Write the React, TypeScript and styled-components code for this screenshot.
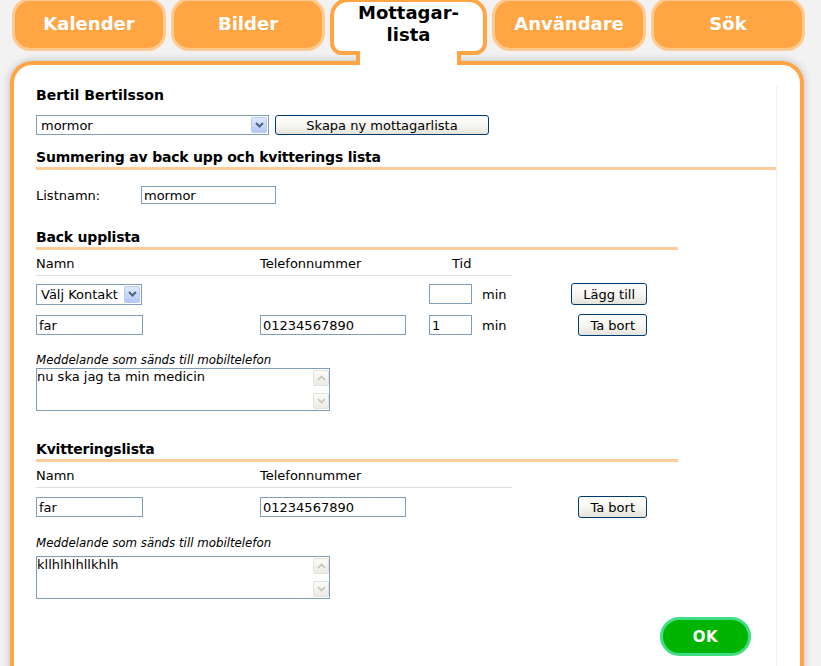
import React from "react";
import styled, { createGlobalStyle } from "styled-components";

const GlobalStyle = createGlobalStyle`
  html, body { margin: 0; padding: 0; background: #f2f2f2; }
  body {
    font-family: "DejaVu Sans", Verdana, sans-serif;
    font-size: 13px;
    color: #000;
    overflow: hidden;
  }
`;

const Page = styled.div`
  width: 821px;
  height: 666px;
  overflow: hidden;
`;

const TabBar = styled.div`
  display: flex;
  align-items: flex-start;
  gap: 5px;
  padding-left: 12px;
  height: 61px;
`;

const Tab = styled.div`
  box-sizing: border-box;
  width: 154px;
  height: 53px;
  margin-top: -2px;
  background: #ffa544;
  border: 3px solid #ffc98f;
  border-radius: 18px;
  display: flex;
  align-items: center;
  justify-content: center;
  padding-bottom: 2px;
  color: #fff;
  font-weight: bold;
  font-size: 18px;
`;

const ActiveTab = styled.div`
  position: relative;
  z-index: 2;
  width: 157px;
  margin-top: -2px;
  display: flex;
  flex-direction: column;
  align-items: center;
`;

const Bubble = styled.div`
  box-sizing: border-box;
  width: 100%;
  height: 57px;
  background: #fff;
  border: 4px solid #ffa544;
  border-radius: 18px 18px 12px 12px;
  text-align: center;
  font-weight: bold;
  font-size: 18px;
  line-height: 22px;
`;

const Neck = styled.div`
  box-sizing: border-box;
  width: 105px;
  height: 14px;
  margin-top: -4px;
  background: #fff;
  border-left: 4px solid #ffa544;
  border-right: 4px solid #ffa544;
`;

const Panel = styled.div`
  box-sizing: border-box;
  margin-left: 10px;
  width: 794px;
  height: 620px;
  border: 4px solid #ffa544;
  border-bottom: none;
  border-radius: 22px 22px 0 0;
  background: #fff;
  box-shadow: 0 0 8px rgba(0, 0, 0, 0.22);
`;

const Content = styled.div`
  box-sizing: border-box;
  width: 763px;
  height: 600px;
  margin-top: 21px;
  padding-left: 22px;
  border-right: 1px solid #efefef;
`;

const Title = styled.div`
  font-weight: bold;
  font-size: 14px;
  line-height: 18px;
`;

const SectionTitle = styled.div<{ $width: number; $top: number }>`
  margin-top: ${(p) => p.$top}px;
  width: ${(p) => p.$width}px;
  font-weight: bold;
  font-size: 14px;
  line-height: 18px;
  letter-spacing: -0.2px;
  padding-bottom: 1px;
  border-bottom: 3px solid #ffcc99;
`;

const ToolRow = styled.div`
  display: flex;
  align-items: center;
  gap: 6px;
  margin-top: 11px;
`;

const SelectBox = styled.div<{ $width: number; $height: number }>`
  box-sizing: border-box;
  width: ${(p) => p.$width}px;
  height: ${(p) => p.$height}px;
  border: 1px solid #7f9db9;
  background: #fff;
  display: flex;
  align-items: center;
  justify-content: space-between;
  padding: 1px 1px 1px 4px;
  font-size: 13px;
`;

const ArrowBox = styled.span`
  box-sizing: border-box;
  width: 16px;
  height: 100%;
  border: 1px solid #b9c9ef;
  border-radius: 2px;
  background: linear-gradient(#dfe9ff, #b4c9f7);
  display: flex;
  align-items: center;
  justify-content: center;
`;

const XPButton = styled.button<{ $width?: number; $height: number }>`
  box-sizing: border-box;
  ${(p) => (p.$width ? `width: ${p.$width}px;` : "padding: 0 11px;")}
  height: ${(p) => p.$height}px;
  border: 1px solid #003c74;
  border-radius: 3px;
  background: linear-gradient(180deg, #ffffff 0%, #f6f5f0 55%, #e3e2da 100%);
  font-family: inherit;
  font-size: 13px;
  color: #000;
  line-height: 1;
`;

const FieldRow = styled.div`
  display: flex;
  align-items: center;
  margin-top: 16px;
`;

const FieldLabel = styled.span`
  width: 105px;
`;

const TextInput = styled.input<{ $width: number; $height: number }>`
  box-sizing: border-box;
  width: ${(p) => p.$width}px;
  height: ${(p) => p.$height}px;
  border: 1px solid #7f9db9;
  padding: 0 2px;
  margin: 0;
  font-family: inherit;
  font-size: 13px;
  color: #000;
  background: #fff;
  outline: none;
`;

const HeaderGrid = styled.div<{ $top: number }>`
  display: grid;
  grid-template-columns: 224px 169px 83px;
  width: 476px;
  margin-top: ${(p) => p.$top}px;
  line-height: 16px;
  padding-bottom: 3px;
  border-bottom: 1px solid #dedede;
`;

const TidHead = styled.span`
  padding-left: 23px;
`;

const ListGrid = styled.div<{ $top: number }>`
  display: grid;
  grid-template-columns: 224px 169px 83px 135px;
  align-items: center;
  margin-top: ${(p) => p.$top}px;
`;

const TimeCell = styled.div`
  display: flex;
  align-items: center;
  gap: 10px;
`;

const ActionCell = styled.div`
  justify-self: end;
  display: flex;
`;

const NoteLabel = styled.div<{ $top: number }>`
  margin-top: ${(p) => p.$top}px;
  font-style: italic;
  font-size: 11.8px;
  line-height: 14px;
`;

const MessageBox = styled.div<{ $top: number }>`
  box-sizing: border-box;
  width: 294px;
  height: 43px;
  margin-top: ${(p) => p.$top}px;
  border: 1px solid #7f9db9;
  display: flex;
  background: #fff;
`;

const MessageText = styled.textarea`
  flex: 1;
  border: none;
  resize: none;
  outline: none;
  margin: 0;
  padding: 0;
  font-family: inherit;
  font-size: 13px;
  line-height: 16px;
  overflow: hidden;
  background: transparent;
  color: #000;
`;

const ScrollBar = styled.div`
  width: 16px;
  display: flex;
  flex-direction: column;
  justify-content: space-between;
  padding: 1px 0;
`;

const ScrollArrow = styled.span`
  box-sizing: border-box;
  width: 16px;
  height: 16px;
  border: 1px solid #e2e1da;
  border-radius: 2px;
  background: linear-gradient(#fbfbf9, #ecebe4);
  display: flex;
  align-items: center;
  justify-content: center;
`;

const Footer = styled.div`
  display: flex;
  justify-content: flex-end;
  padding-right: 25px;
  margin-top: 18px;
`;

const OkButton = styled.button`
  box-sizing: border-box;
  width: 91px;
  height: 39px;
  background: #00b400;
  border: 3px solid #3ede82;
  border-radius: 20px;
  color: #fff;
  font-family: inherit;
  font-weight: bold;
  font-size: 15px;
  letter-spacing: 0.5px;
`;

const Chevron = ({ up, color, w = 2 }: { up?: boolean; color: string; w?: number }) => (
  <svg width="9" height="6" viewBox="0 0 9 6">
    <polyline
      points={up ? "1,5 4.5,1.5 8,5" : "1,1 4.5,4.5 8,1"}
      fill="none"
      stroke={color}
      strokeWidth={w}
    />
  </svg>
);

const Select = ({ text, width, height }: { text: string; width: number; height: number }) => (
  <SelectBox $width={width} $height={height}>
    <span>{text}</span>
    <ArrowBox>
      <Chevron color="#4d6185" />
    </ArrowBox>
  </SelectBox>
);

const Message = ({ text, top }: { text: string; top: number }) => (
  <MessageBox $top={top}>
    <MessageText defaultValue={text} />
    <ScrollBar>
      <ScrollArrow>
        <Chevron up color="#c4c4bc" w={1.6} />
      </ScrollArrow>
      <ScrollArrow>
        <Chevron color="#c4c4bc" w={1.6} />
      </ScrollArrow>
    </ScrollBar>
  </MessageBox>
);

export default function App() {
  return (
    <Page>
      <GlobalStyle />
      <TabBar>
        <Tab>Kalender</Tab>
        <Tab>Bilder</Tab>
        <ActiveTab>
          <Bubble>
            Mottagar-
            <br />
            lista
          </Bubble>
          <Neck />
        </ActiveTab>
        <Tab>Användare</Tab>
        <Tab>Sök</Tab>
      </TabBar>
      <Panel>
        <Content>
          <Title>Bertil Bertilsson</Title>
          <ToolRow>
            <Select text="mormor" width={233} height={20} />
            <XPButton $width={214} $height={20}>
              Skapa ny mottagarlista
            </XPButton>
          </ToolRow>

          <SectionTitle $width={740} $top={13}>
            Summering av back upp och kvitterings lista
          </SectionTitle>
          <FieldRow>
            <FieldLabel>Listnamn:</FieldLabel>
            <TextInput $width={135} $height={18} defaultValue="mormor" />
          </FieldRow>

          <SectionTitle $width={642} $top={24}>
            Back upplista
          </SectionTitle>
          <HeaderGrid $top={6}>
            <span>Namn</span>
            <span>Telefonnummer</span>
            <TidHead>Tid</TidHead>
          </HeaderGrid>
          <ListGrid $top={7}>
            <Select text="Välj Kontakt" width={106} height={21} />
            <span />
            <TimeCell>
              <TextInput $width={43} $height={20} defaultValue="" />
              <span>min</span>
            </TimeCell>
            <ActionCell>
              <XPButton $height={22}>Lägg till</XPButton>
            </ActionCell>
          </ListGrid>
          <ListGrid $top={9}>
            <TextInput $width={107} $height={20} defaultValue="far" />
            <TextInput $width={146} $height={20} defaultValue="01234567890" />
            <TimeCell>
              <TextInput $width={43} $height={20} defaultValue="1" />
              <span>min</span>
            </TimeCell>
            <ActionCell>
              <XPButton $height={22}>Ta bort</XPButton>
            </ActionCell>
          </ListGrid>
          <NoteLabel $top={17}>Meddelande som sänds till mobiltelefon</NoteLabel>
          <Message text="nu ska jag ta min medicin" top={1} />

          <SectionTitle $width={642} $top={29}>
            Kvitteringslista
          </SectionTitle>
          <HeaderGrid $top={6}>
            <span>Namn</span>
            <span>Telefonnummer</span>
          </HeaderGrid>
          <ListGrid $top={8}>
            <TextInput $width={107} $height={20} defaultValue="far" />
            <TextInput $width={146} $height={20} defaultValue="01234567890" />
            <span />
            <ActionCell>
              <XPButton $height={22}>Ta bort</XPButton>
            </ActionCell>
          </ListGrid>
          <NoteLabel $top={18}>Meddelande som sänds till mobiltelefon</NoteLabel>
          <Message text="kllhlhlhllkhlh" top={6} />

          <Footer>
            <OkButton>OK</OkButton>
          </Footer>
        </Content>
      </Panel>
    </Page>
  );
}
